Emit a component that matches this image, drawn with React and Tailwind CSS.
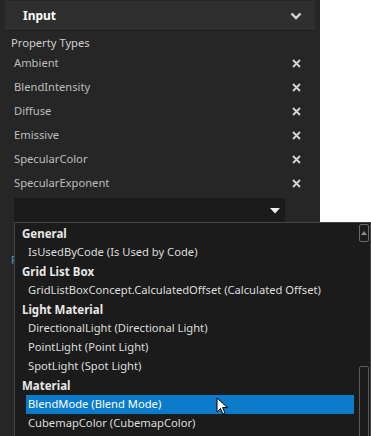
import React from "react";

const properties = [
  "Ambient",
  "BlendIntensity",
  "Diffuse",
  "Emissive",
  "SpecularColor",
  "SpecularExponent",
];

const options = [
  { label: "General", group: true },
  { label: "IsUsedByCode (Is Used by Code)" },
  { label: "Grid List Box", group: true },
  { label: "GridListBoxConcept.CalculatedOffset (Calculated Offset)" },
  { label: "Light Material", group: true },
  { label: "DirectionalLight (Directional Light)" },
  { label: "PointLight (Point Light)" },
  { label: "SpotLight (Spot Light)" },
  { label: "Material", group: true },
  { label: "BlendMode (Blend Mode)", selected: true },
  { label: "CubemapColor (CubemapColor)" },
];

const CloseIcon = () => (
  <svg width="9" height="9" viewBox="0 0 9 9">
    <path d="M1 1 L8 8 M8 1 L1 8" stroke="#d4d4d4" strokeWidth="1.8" />
  </svg>
);

const App = () => {
  return (
    <div
      className="relative w-[371px] h-[436px] overflow-hidden bg-white"
      style={{ fontFamily: '"Noto Sans", "Open Sans", sans-serif' }}
    >
      {/* property panel */}
      <div className="w-[320px] h-full bg-[#262626] pt-px">
        <div className="ml-[5px] w-[310px] h-[30px] bg-[#2e2e2e] border-b border-[#1c1c1c] flex items-center justify-between pl-[18px] pr-[13px]">
          <span className="text-[12px] font-bold text-white">Input</span>
          <svg width="12" height="8" viewBox="0 0 12 8">
            <path d="M1.5 1.5 L6 6 L10.5 1.5" stroke="#d8d8d8" strokeWidth="2.4" fill="none" />
          </svg>
        </div>

        <div className="pl-[11px] pt-[4px] h-[16px] leading-[16px] text-[11.2px] text-[#cfcfcf]">
          Property Types
        </div>

        <div className="mt-[4px]">
          {properties.map((p) => (
            <div key={p} className="h-[24px] flex items-center justify-between pl-[14px] pr-[19px]">
              <span className="text-[11.2px] text-[#bdbdbd]">{p}</span>
              <CloseIcon />
            </div>
          ))}
        </div>

        <div className="ml-[14px] mt-[3px] w-[271px] h-[26px] bg-[#1b1b1b] flex items-start justify-end pr-[5px] pt-[10px]">
          <svg width="10" height="6" viewBox="0 0 10 6">
            <path d="M0 0 H10 L5 5.5 Z" fill="#f2f2f2" />
          </svg>
        </div>

        <div className="pl-[11px] mt-[28px] text-[11.2px] text-[#5a8ed6]">F</div>
      </div>

      {/* dropdown popup */}
      <div className="absolute left-[14px] top-[222px] w-[357px] h-[230px] bg-[#1b1b1b] border border-[#434343] pt-px">
        <div className="w-[339px]">
          {options.map((o) =>
            o.group ? (
              <div key={o.label} className="h-[19px] flex items-center pl-[7px] text-[11.5px] font-bold text-[#e8e8e8]">
                {o.label}
              </div>
            ) : (
              <div
                key={o.label}
                className={`h-[19px] flex items-center ml-[11px] pl-[2px] text-[11.2px] ${
                  o.selected ? "bg-[#0a7bcb] text-white" : "text-[#dedede]"
                }`}
              >
                {o.label}
              </div>
            )
          )}
        </div>

        {/* scrollbar */}
        <div className="absolute right-[1px] top-px w-[10px] h-[18px] rounded-[2px] border border-[#6b6b6b] flex items-center justify-center">
          <svg width="6" height="4" viewBox="0 0 6 4">
            <path d="M0 4 L3 0 L6 4 Z" fill="#8a8a8a" />
          </svg>
        </div>
        <div className="absolute right-[1px] top-[143px] w-[10px] h-[90px] rounded-[2px] border border-[#5a5a5a]" />
      </div>

      {/* mouse cursor */}
      <svg className="absolute left-[216px] top-[397px]" width="13" height="19" viewBox="0 0 13 19">
        <path d="M1 1 L1 15 L4.5 11.5 L7 17 L9 16 L6.6 10.6 L11.5 10.6 Z" fill="#ffffff" stroke="#000000" strokeWidth="1" />
      </svg>
    </div>
  );
};

export default App;
